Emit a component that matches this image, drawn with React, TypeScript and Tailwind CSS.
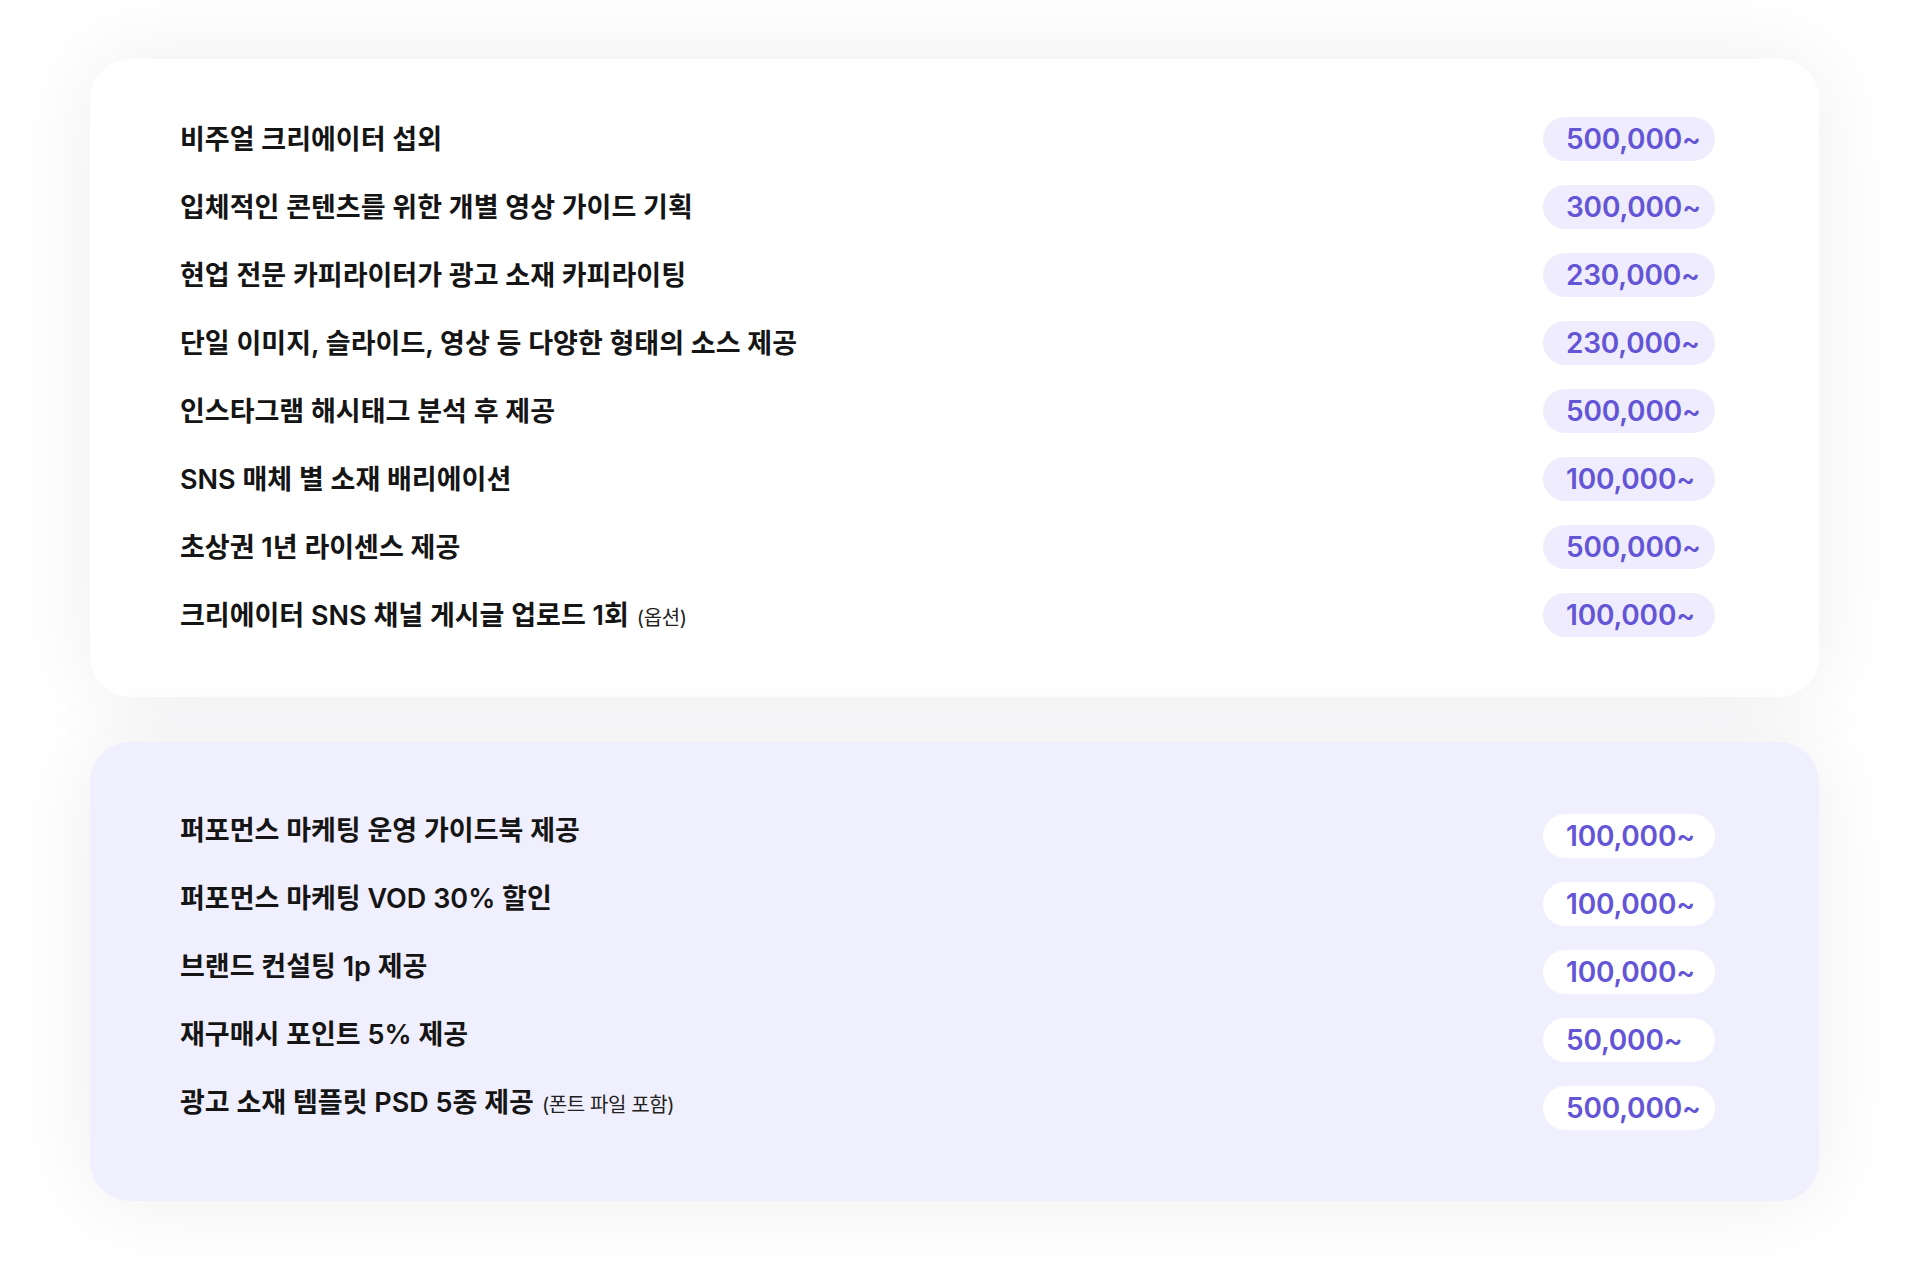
const basic = [
  { title: '비주얼 크리에이터 섭외', price: '500,000~' },
  { title: '입체적인 콘텐츠를 위한 개별 영상 가이드 기획', price: '300,000~' },
  { title: '현업 전문 카피라이터가 광고 소재 카피라이팅', price: '230,000~' },
  { title: '단일 이미지, 슬라이드, 영상 등 다양한 형태의 소스 제공', price: '230,000~' },
  { title: '인스타그램 해시태그 분석 후 제공', price: '500,000~' },
  { title: 'SNS 매체 별 소재 배리에이션', price: '100,000~' },
  { title: '초상권 1년 라이센스 제공', price: '500,000~' },
  { title: '크리에이터 SNS 채널 게시글 업로드 1회', note: '(옵션)', price: '100,000~' },
];

const bonus = [
  { title: '퍼포먼스 마케팅 운영 가이드북 제공', price: '100,000~' },
  { title: '퍼포먼스 마케팅 VOD 30% 할인', price: '100,000~' },
  { title: '브랜드 컨설팅 1p 제공', price: '100,000~' },
  { title: '재구매시 포인트 5% 제공', price: '50,000~' },
  { title: '광고 소재 템플릿 PSD 5종 제공', note: '(폰트 파일 포함)', price: '500,000~' },
];

type Item = { title: string; note?: string; price: string };

function Row({ item, pill, lifted }: { item: Item; pill: string; lifted?: boolean }) {
  return (
    <div className="flex h-[44px] items-center justify-between">
      <p
        className={`flex items-baseline gap-[8px] text-[27px] font-semibold text-[#151515] ${lifted ? 'mb-[9px]' : 'mt-[2px]'}`}
      >
        <span>{item.title}</span>
        {item.note && <span className="text-[20px] font-normal tracking-[-0.4px] text-[#222]">{item.note}</span>}
      </p>
      <span
        className={`flex h-[44px] w-[172px] items-center rounded-full pl-[23px] font-['Inter'] text-[28px] font-semibold tracking-[-0.2px] text-[#6455d6] ${pill}`}
      >
        {item.price}
      </span>
    </div>
  );
}

export default function App() {
  return (
    <div className="min-h-[1271px] w-full bg-white pt-[59px] font-['Inter','Noto_Sans_CJK_KR',sans-serif]">
      <div className="ml-[90px] flex w-[1729px] flex-col gap-[45px]">
        <section className="flex flex-col gap-[24px] rounded-[40px] bg-white pb-[60px] pl-[90px] pr-[104px] pt-[58px] shadow-[0_0_90px_rgba(30,30,60,0.07)]">
          {basic.map((item) => (
            <Row key={item.title} item={item} pill="bg-[#efedfd]" />
          ))}
        </section>
        <section className="flex flex-col gap-[24px] rounded-[40px] bg-[#f0effd] pb-[71px] pl-[90px] pr-[104px] pt-[72px] shadow-[0_0_90px_rgba(30,30,60,0.07)]">
          {bonus.map((item) => (
            <Row key={item.title} item={item} pill="bg-white" lifted />
          ))}
        </section>
      </div>
    </div>
  );
}
